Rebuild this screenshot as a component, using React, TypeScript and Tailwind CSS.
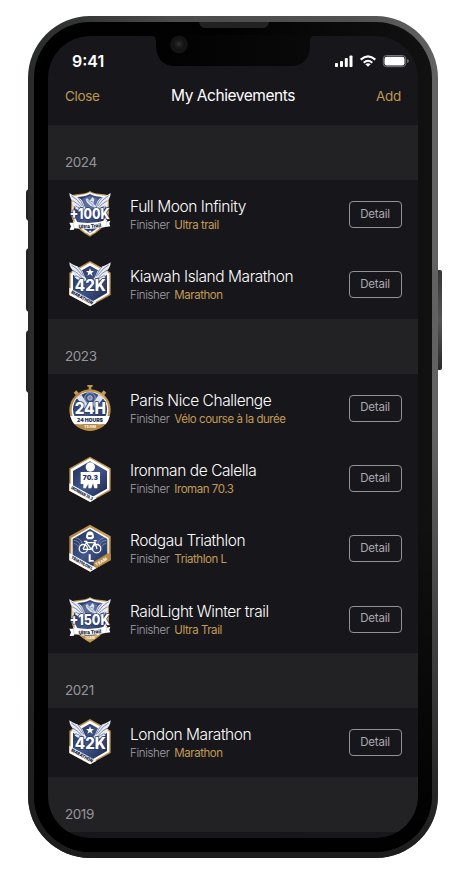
import React from "react";

type BadgeKind = "100k" | "42k" | "24h" | "70" | "tri" | "150k";
type Item = { name: string; type: string; badge: BadgeKind };

const HEX = "90,33 152,68 152,135 90,169 28,135 28,68";
const HEX_WHITE = "90,38 148,71 148,132 90,165 32,132 32,71";
const HEX_NAVY = "90,47 141,76 141,129 90,158 39,129 39,76";

function Defs() {
  return (
    <svg className="absolute size-0" aria-hidden="true">
      <defs>
        <linearGradient id="navy" x1="0" y1="0" x2="1" y2="1">
          <stop offset="0" stopColor="#202d54" />
          <stop offset=".5" stopColor="#43568a" />
          <stop offset="1" stopColor="#1a2649" />
        </linearGradient>
        <linearGradient id="gold" x1="0" y1="0" x2="1" y2="1">
          <stop offset="0" stopColor="#a87b3c" />
          <stop offset=".5" stopColor="#d0a45a" />
          <stop offset="1" stopColor="#ac8040" />
        </linearGradient>
        <g id="wing">
          <path d="M28 37 C40 47 55 48 63 56 C71 65 71 78 80 87 L76 93 C61 93 48 88 43 80 L49 81 C40 76 36 70 35 63 L42 66 C34 58 28 48 28 37Z" fill="#e9ecf4" />
          <path d="M34 45 Q53 55 67 77 M38 60 Q54 68 67 84 M46 76 Q58 81 70 89 M54 51 Q65 61 72 80" fill="none" stroke="#717e9f" strokeWidth="2.6" />
        </g>
        <g id="wings">
          <use href="#wing" />
          <use href="#wing" transform="translate(180 0) scale(-1 1)" />
        </g>
      </defs>
    </svg>
  );
}

function HexBase() {
  return (
    <>
      <polygon points={HEX} fill="url(#gold)" />
      <polygon points={HEX_WHITE} fill="#fff" />
      <polygon points={HEX_NAVY} fill="url(#navy)" />
    </>
  );
}

function Ribbon({ label, size }: { label: string; size: number }) {
  return (
    <>
      <path d="M28 113 L109 158 L91 169 L28 135Z" fill="#fff" />
      <text transform="translate(64 147) rotate(29)" textAnchor="middle" fontSize={size} fontWeight="900" fill="#20263c" textLength="72" lengthAdjust="spacingAndGlyphs">
        {label}
      </text>
    </>
  );
}

function Shield({ label, team }: { label: string; team?: boolean }) {
  return (
    <>
      <path d="M90 33 C107 44 128 40 146 46 L147 88 C150 132 119 153 90 170 C61 153 30 132 33 88 L34 46 C52 40 73 44 90 33Z" fill="url(#gold)" />
      <path d="M90 37 C108 47 126 44 142 49 L143 88 C145 127 117 149 90 165 C63 149 35 127 37 88 L38 49 C54 44 72 47 90 37Z" fill="#fff" />
      <path d="M90 42 C107 51 124 49 138 53 L139 88 C140 125 114 144 90 160 C66 144 40 125 41 88 L42 53 C56 49 73 51 90 42Z" fill="url(#navy)" />
      <ellipse cx="90" cy="68" rx="27" ry="19" fill="#6a7dac" opacity=".7" />
      <use href="#wings" transform="translate(0 2)" />
      <path d="M77 58 L82 55 L89 62 L98 51 L103 59 L100 71 L108 78 L106 83 L91 77 L80 67Z" fill="#dce3ef" />
      <path d="M82 60 L101 78 M92 64 L100 66" stroke="#5b6d96" strokeWidth="2" />
      <text x="89" y="118" textAnchor="middle" fontSize="44" fontWeight="800" fill="#fff" stroke="#2b3963" strokeWidth="5" strokeLinejoin="round" paintOrder="stroke" textLength="120" lengthAdjust="spacingAndGlyphs">
        {label}
      </text>
      <path d="M28 128 L41 128 L39 124 Q92 136 141 120 L140 125 L151 122 L148 131 L151 139 L137 141 Q90 151 43 145 L42 149 L29 150 L33 139Z" fill="#fff" />
      <path d="M39 126 L43 145 M141 122 L137 141" stroke="#a9b2c7" strokeWidth="1.5" />
      <text transform="translate(90 144) rotate(-4)" textAnchor="middle" fontSize="16" fontWeight="900" fill="#242a3e" textLength="68" lengthAdjust="spacingAndGlyphs">
        Ultra Trail
      </text>
      {team ? (
        <>
          <path d="M64 149 L115 147 Q107 158 90 168 Q74 159 64 149Z" fill="url(#gold)" />
          <text x="90" y="158" textAnchor="middle" fontSize="10" fontWeight="800" fill="#f5ebd9">TEAM</text>
        </>
      ) : (
        <text x="90" y="160" textAnchor="middle" fontSize="12" fill="#fff">★★★</text>
      )}
    </>
  );
}

function Badge({ kind }: { kind: BadgeKind }) {
  return (
    <svg viewBox="0 0 180 192" className="ml-3 h-16 w-[60px] shrink-0 self-start overflow-visible" fontFamily="Inter, sans-serif">
      {kind === "100k" && <Shield label="+100K" />}
      {kind === "150k" && <g transform="translate(0 3)"><Shield label="+150K" team /></g>}
      {kind === "42k" && (
        <>
          <HexBase />
          <use href="#wings" />
          <path d="M90 54 L93 63 L102 63 L95 69 L98 78 L90 72 L82 78 L85 69 L78 63 L87 63Z" fill="#fff" />
          <text x="91" y="124" textAnchor="middle" fontSize="46" fontWeight="800" fill="#fff" stroke="#2b3963" strokeWidth="5" strokeLinejoin="round" paintOrder="stroke" textLength="93" lengthAdjust="spacingAndGlyphs">42K</text>
          <Ribbon label="MARATHON" size={14} />
        </>
      )}
      {kind === "24h" && (
        <g transform="translate(0 6)">
          <path d="M82 27 h16 v5 h-4 v9 h-8 v-9 h-4Z M41 50 l8-7 7 8-8 7Z M139 50 l-8-7-7 8 8 7Z" fill="#c49b56" />
          <circle cx="90" cy="102" r="62" fill="url(#gold)" />
          <circle cx="90" cy="102" r="55" fill="#fff" />
          <circle cx="90" cy="100" r="51" fill="url(#navy)" />
          <path d="M50 66 L64 56 L83 84 L74 97Z M130 66 L116 56 L97 84 L106 97Z" fill="#dce2ed" />
          <circle cx="90" cy="66" r="16" fill="#43547d" stroke="#8fa0c4" strokeWidth="3" />
          <circle cx="90" cy="66" r="7" fill="#7b8db5" stroke="#dce3f0" strokeWidth="2" />
          <path d="M45 77 L69 101 M135 77 L111 101" stroke="#8290b3" strokeWidth="3" />
          <text x="91" y="115" textAnchor="middle" fontSize="49" fontWeight="800" fill="#fff" stroke="#2d3c67" strokeWidth="5" strokeLinejoin="round" paintOrder="stroke" textLength="94" lengthAdjust="spacingAndGlyphs">24H</text>
          <path d="M31 120 H149 Q145 137 137 145 H43 Q35 135 31 120Z" fill="#fff" />
          <text x="90" y="138" textAnchor="middle" fontSize="16" fontWeight="900" fill="#26304d" textLength="78" lengthAdjust="spacingAndGlyphs">24 HOURS</text>
          <path d="M43 145 H137 Q121 162 90 165 Q59 162 43 145Z" fill="#b88c4b" />
          <text x="90" y="157" textAnchor="middle" fontSize="12" fontWeight="800" fill="#f8eedb" textLength="36">TEAM</text>
        </g>
      )}
      {kind === "70" && (
        <g transform="translate(0 5)">
          <HexBase />
          <circle cx="91" cy="64" r="14" fill="#fff" />
          <path d="M62 79 H120 V115 H112 V128 H103 L99 113 L94 128 H85 V114 L77 128 H70 V115 H62Z" fill="#fff" />
          <text x="91" y="104" textAnchor="middle" fontSize="19" fontWeight="900" fill="#26345e" textLength="45" lengthAdjust="spacingAndGlyphs">70.3</text>
          <Ribbon label="IRONMAN 70.3" size={13} />
        </g>
      )}
      {kind === "tri" && (
        <g transform="translate(0 4)">
          <polygon points="90,28 152,63 152,134 90,169 28,134 28,63" fill="url(#gold)" />
          <polygon points="90,36 146,68 146,132 90,164 34,132 34,68" fill="#fff" />
          <polygon points="90,41 142,71 142,129 90,159 38,129 38,71" fill="url(#navy)" />
          <path d="M45 67 Q65 70 67 88 M41 75 Q58 76 61 91 M41 84 Q51 85 55 94 M135 67 Q115 70 113 88 M139 75 Q122 76 119 91 M139 84 Q129 85 125 94" fill="none" stroke="#909fc1" strokeWidth="2" />
          <path d="M78 66 Q78 48 90 48 Q102 48 102 66 L97 72 H82Z" fill="#fff" />
          <path d="M84 60 H97 L94 65 H85Z" fill="#394b75" />
          <g fill="none" stroke="#fff" strokeWidth="3.8">
            <circle cx="70" cy="100" r="12.5" /><circle cx="110" cy="100" r="12.5" />
            <path d="M69 101 L79 82 L94 102 L105 81 L111 101 M77 82 H105 M94 102 H69 M72 78 H82 M101 76 H110" />
          </g>
          <path d="M86 117 H92 V134 H101 V139 H86Z" fill="#fff" />
          <path d="M101 140 L143 114 L152 116 V135 L101 163Z" fill="#b48a49" />
          <Ribbon label="TRIATHLON L" size={13} />
          <text transform="translate(126 143) rotate(-29)" textAnchor="middle" fontSize="13" fontWeight="800" fill="#fff5df" textLength="39">TEAM</text>
        </g>
      )}
    </svg>
  );
}

function Year({ year }: { year: string }) {
  return (
    <div className="flex h-[55px] shrink-0 items-end bg-[#222224] pb-2 pl-[17px] text-[13.5px] leading-5 tracking-[-0.45px] text-[#96959b]">
      {year}
    </div>
  );
}

function Row({ item }: { item: Item }) {
  return (
    <div className="flex h-[68.6px] shrink-0 items-center pr-4">
      <Badge kind={item.badge} />
      <div className="ml-[10px] flex-1 pt-[2px] whitespace-nowrap">
        <div className="text-[15.5px] leading-[20px] font-light tracking-[-0.43px] text-white">{item.name}</div>
        <div className="flex gap-[4.8px] text-[11.5px] leading-[17px] font-light tracking-[-0.36px]">
          <span className="text-[#a3a2a9]">Finisher</span>
          <span className="font-normal tracking-[-0.45px] text-[#c09b56]">{item.type}</span>
        </div>
      </div>
      <button className="h-[27px] w-[53px] rounded-[4px] border border-[#929198] pr-[1px] text-[11.5px] leading-none tracking-[-0.2px] text-[#aaa9b0]">Detail</button>
    </div>
  );
}

function Group({ year, items }: { year: string; items: Item[] }) {
  return (
    <section>
      <Year year={year} />
      <div className="flex flex-col gap-[1.7px]">
        {items.map((item) => <Row key={item.name} item={item} />)}
      </div>
    </section>
  );
}

const groups: { year: string; items: Item[] }[] = [
  { year: "2024", items: [
    { name: "Full Moon Infinity", type: "Ultra trail", badge: "100k" },
    { name: "Kiawah Island Marathon", type: "Marathon", badge: "42k" },
  ] },
  { year: "2023", items: [
    { name: "Paris Nice Challenge", type: "Vélo course à la durée", badge: "24h" },
    { name: "Ironman de Calella", type: "Iroman 70.3", badge: "70" },
    { name: "Rodgau Triathlon", type: "Triathlon L", badge: "tri" },
    { name: "RaidLight Winter trail", type: "Ultra Trail", badge: "150k" },
  ] },
  { year: "2021", items: [{ name: "London Marathon", type: "Marathon", badge: "42k" }] },
  { year: "2019", items: [] },
];

function StatusIcons() {
  return (
    <svg viewBox="0 0 76 14" className="h-[14px] w-[76px]" fill="#fff">
      <rect x="0" y="9" width="3" height="4" rx=".8" />
      <rect x="5" y="7" width="3" height="6" rx=".8" />
      <rect x="9.8" y="4.1" width="3" height="8.9" rx=".8" />
      <rect x="14.5" y="1.5" width="3" height="11.5" rx=".8" />
      <g fill="none" stroke="#fff" strokeWidth="2.1">
        <path d="M25.7 5.6 Q33 -.8 40.3 5.6" />
        <path d="M28.7 8.7 Q33 4.8 37.3 8.7" />
      </g>
      <path d="M30.4 10.2 Q33 8.2 35.6 10.2 L33 12.8Z" />
      <rect x="48.3" y="1.5" width="22.4" height="11.2" rx="3.3" fill="none" stroke="#77767b" />
      <rect x="49.5" y="2.7" width="20" height="8.8" rx="2.2" />
      <path d="M72 5.1 Q74 5.7 74 7.1 Q74 8.5 72 9.1Z" fill="#69686d" />
    </svg>
  );
}

export default function App() {
  return (
    <main className="relative h-[890px] w-[469px] overflow-hidden bg-white pt-4 pl-7 font-['Inter',sans-serif]">
      <Defs />
      <div className="absolute top-[189px] left-[26px] h-8 w-1 rounded-l-sm bg-[#222]" />
      <div className="absolute top-[248px] left-[26px] h-16 w-1 rounded-l-sm bg-[#222]" />
      <div className="absolute top-[330px] left-[26px] h-[63px] w-1 rounded-l-sm bg-[#222]" />
      <div className="absolute top-[270px] left-[436px] h-[100px] w-[6px] rounded-r-[2px] bg-linear-to-b from-[#353535] via-[#555] to-[#292929]" />
      <div className="relative h-[842px] w-[410px] rounded-[62px] bg-[linear-gradient(90deg,#292b2b_0%,#303131_8%,#4b4b4b_35%,#515151_80%,#626262_100%)] p-[6px]">
        <div className="absolute inset-0 rounded-[62px] bg-linear-to-b from-transparent from-50% to-[#1c1c1c]" />
        <div className="relative h-full rounded-[56px] bg-[linear-gradient(90deg,#000_0%,#020202_50%,#111_100%)] p-[14px]">
          <div className="absolute inset-0 rounded-[56px] bg-linear-to-b from-transparent from-60% to-black" />
          <div className="relative flex h-[802px] w-[370px] flex-col overflow-hidden rounded-[42px] bg-[#17161b]">
            <header className="h-[89px] shrink-0">
              <div className="flex h-[50px] items-center justify-between pr-[7px] pl-6">
                <span className="text-[16px] leading-5 font-semibold text-white">9:41</span>
                <StatusIcons />
              </div>
              <div className="grid grid-cols-[70px_1fr_70px] items-center pr-[17px] pl-[17px] leading-5">
                <span className="text-[13.5px] tracking-[-0.35px] text-[#bd9852]">Close</span>
                <span className="-mt-px text-center text-[15.5px] tracking-[-0.45px] whitespace-nowrap text-white">My Achievements</span>
                <span className="text-right text-[13.5px] tracking-[-0.3px] text-[#bd9852]">Add</span>
              </div>
            </header>
            {groups.map((group) => <Group key={group.year} {...group} />)}
          </div>
          <svg className="absolute top-0 left-0 h-[50px] w-[398px]" viewBox="34 22 398 50">
            <defs>
              <linearGradient id="notch"><stop stopColor="#010101" /><stop offset="1" stopColor="#090909" /></linearGradient>
              <radialGradient id="lens"><stop stopColor="#353535" /><stop offset=".45" stopColor="#202020" /><stop offset="1" stopColor="#131313" /></radialGradient>
            </defs>
            <path d="M152 35 V36 Q156 36 156 41 V46 Q157 66 175 66 H291 Q309 66 310 46 V41 Q310 36 314 36 V35Z" fill="url(#notch)" />
            <path d="M199 22 H269 Q268 28 263 28 H205 Q200 28 199 22Z" fill="#222" />
            <circle cx="179" cy="44.5" r="9" fill="#131313" />
            <circle cx="179" cy="44" r="5.5" fill="url(#lens)" />
          </svg>
        </div>
      </div>
    </main>
  );
}
